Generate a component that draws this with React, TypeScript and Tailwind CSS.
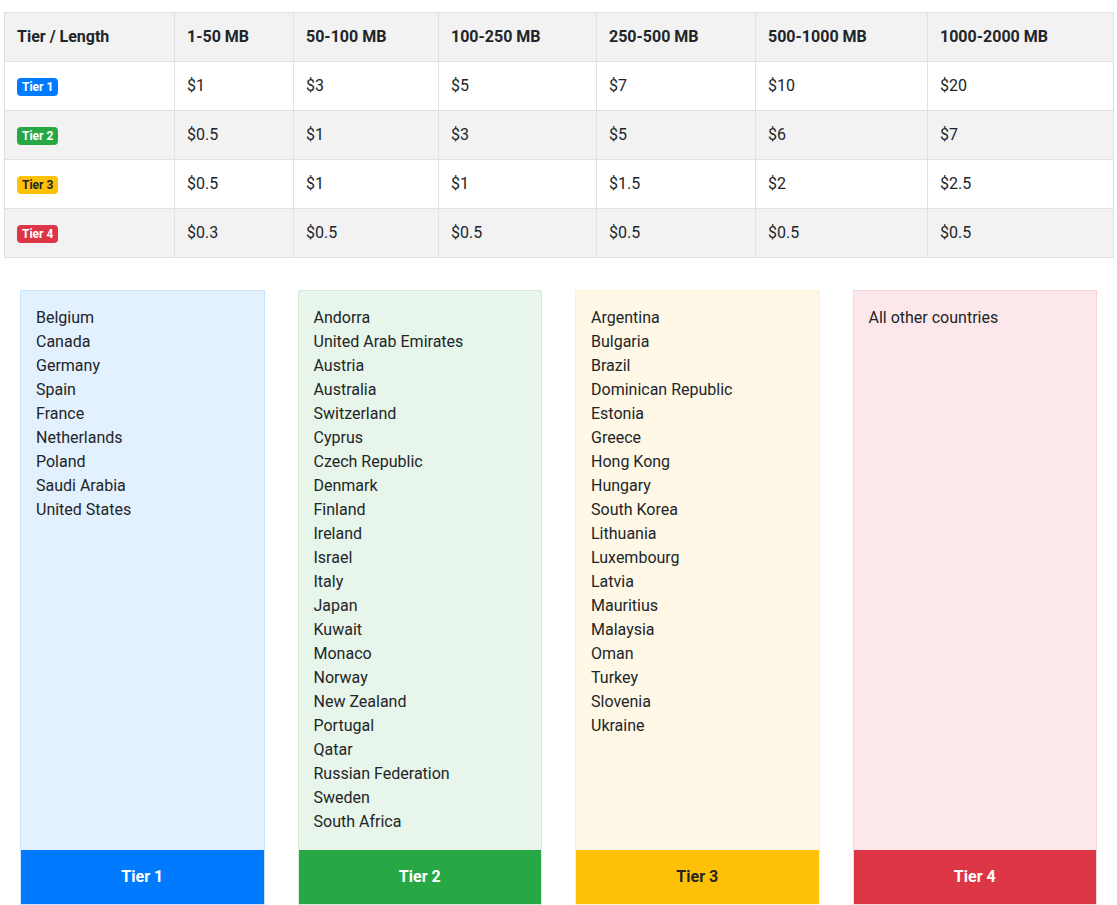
import React from "react";

const headers = ["Tier / Length", "1-50 MB", "50-100 MB", "100-250 MB", "250-500 MB", "500-1000 MB", "1000-2000 MB"];
const widths = ["w-[170px]", "w-[119px]", "w-[145px]", "w-[158px]", "w-[159px]", "w-[172px]", "w-[186px]"];

const rows = [
  { label: "Tier 1", badge: "bg-[#007bff] text-white", values: ["$1", "$3", "$5", "$7", "$10", "$20"] },
  { label: "Tier 2", badge: "bg-[#28a745] text-white", values: ["$0.5", "$1", "$3", "$5", "$6", "$7"] },
  { label: "Tier 3", badge: "bg-[#ffc107] text-[#212529]", values: ["$0.5", "$1", "$1", "$1.5", "$2", "$2.5"] },
  { label: "Tier 4", badge: "bg-[#dc3545] text-white", values: ["$0.3", "$0.5", "$0.5", "$0.5", "$0.5", "$0.5"] },
];

const cards = [
  {
    label: "Tier 1",
    body: "bg-[#e3f0fd] border-[#cce5ff]",
    foot: "bg-[#007bff] text-white",
    countries: ["Belgium", "Canada", "Germany", "Spain", "France", "Netherlands", "Poland", "Saudi Arabia", "United States"],
  },
  {
    label: "Tier 2",
    body: "bg-[#e8f5ea] border-[#d4edda]",
    foot: "bg-[#28a745] text-white",
    countries: [
      "Andorra", "United Arab Emirates", "Austria", "Australia", "Switzerland", "Cyprus", "Czech Republic", "Denmark",
      "Finland", "Ireland", "Israel", "Italy", "Japan", "Kuwait", "Monaco", "Norway", "New Zealand", "Portugal", "Qatar",
      "Russian Federation", "Sweden", "South Africa",
    ],
  },
  {
    label: "Tier 3",
    body: "bg-[#fff8e6] border-[#fff3cd]",
    foot: "bg-[#ffc107] text-[#212529]",
    countries: [
      "Argentina", "Bulgaria", "Brazil", "Dominican Republic", "Estonia", "Greece", "Hong Kong", "Hungary", "South Korea",
      "Lithuania", "Luxembourg", "Latvia", "Mauritius", "Malaysia", "Oman", "Turkey", "Slovenia", "Ukraine",
    ],
  },
  {
    label: "Tier 4",
    body: "bg-[#fce8ea] border-[#f8d7da]",
    foot: "bg-[#dc3545] text-white",
    countries: ["All other countries"],
  },
];

export default function App() {
  return (
    <div className="bg-white text-[#212529] text-[16px] leading-[24px]" style={{ fontFamily: "Roboto, 'Liberation Sans', sans-serif" }}>
      <div className="px-1 pt-3">
        <table className="w-full table-fixed border-collapse border border-[#dee2e6]">
          <thead>
            <tr className="bg-[#f2f2f2]">
              {headers.map((h, i) => (
                <th key={h} className={`${widths[i]} border border-[#dee2e6] px-3 py-3 text-left font-bold`}>{h}</th>
              ))}
            </tr>
          </thead>
          <tbody>
            {rows.map((r, ri) => (
              <tr key={r.label} className={ri % 2 === 1 ? "bg-[#f2f2f2]" : "bg-white"}>
                <td className="border border-[#dee2e6] px-3 py-3">
                  <span className={`${r.badge} inline-block rounded-[4px] px-[5px] text-[12px] leading-[18px] font-bold align-middle`}>{r.label}</span>
                </td>
                {r.values.map((v, vi) => (
                  <td key={vi} className="border border-[#dee2e6] px-3 py-3">{v}</td>
                ))}
              </tr>
            ))}
          </tbody>
        </table>
      </div>
      <div className="grid grid-cols-4 gap-[33px] px-5 pt-[32px]">
        {cards.map((c) => (
          <div key={c.label} className={`flex flex-col border ${c.body}`}>
            <div className="flex-1 px-[15px] pt-[15px] pb-[16px]">
              {c.countries.map((n) => (
                <div key={n}>{n}</div>
              ))}
            </div>
            <div className={`${c.foot} py-[15px] text-center font-bold`}>{c.label}</div>
          </div>
        ))}
      </div>
    </div>
  );
}
